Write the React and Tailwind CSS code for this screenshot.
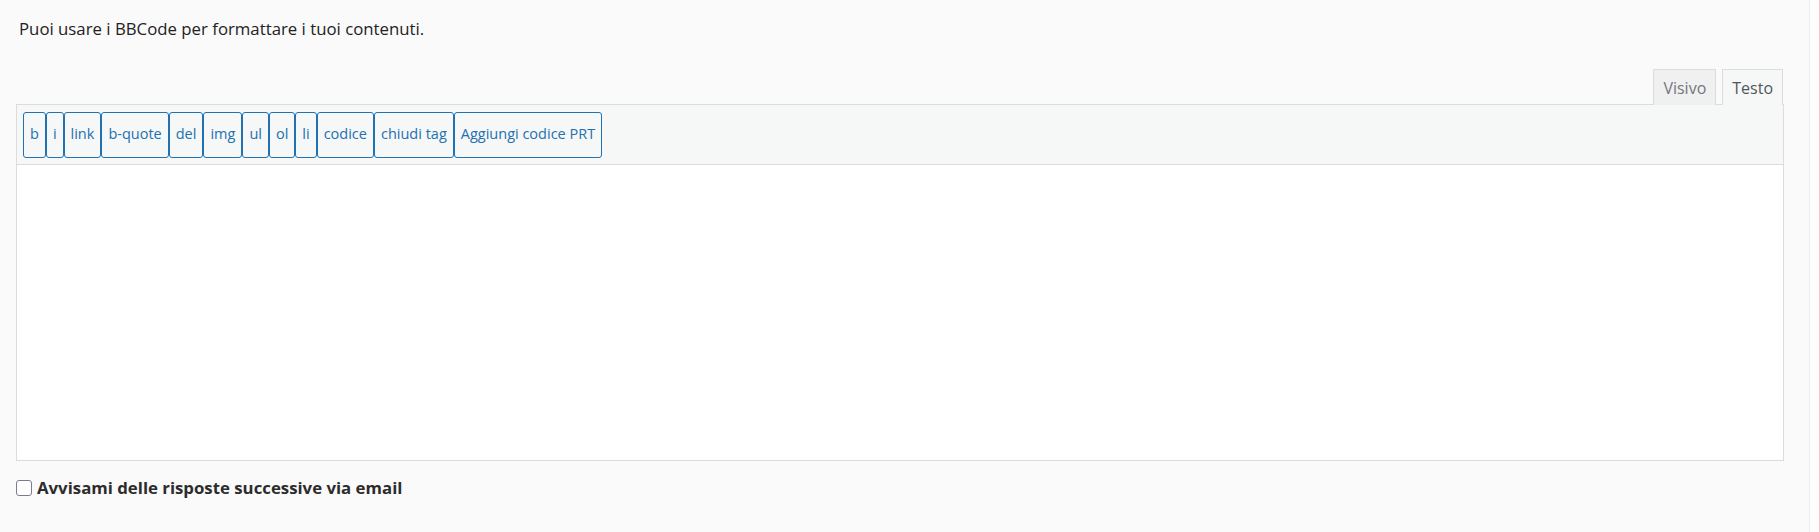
const BUTTONS = ['b', 'i', 'link', 'b-quote', 'del', 'img', 'ul', 'ol', 'li', 'codice', 'chiudi tag', 'Aggiungi codice PRT'];

export default function App() {
  return (
    <div className="bg-[#fdfdfd] w-[1819px] min-h-[532px]" style={{ fontFamily: '"Open Sans", "Noto Sans", sans-serif' }}>
      <div className="w-[1810px] min-h-[532px] bg-[#fafafa] border-r border-[#ececec] pl-4 pr-[25px] pt-[16px]">

        {/* Intro */}
        <p className="text-[16.8px] leading-[26px] text-[#222] pl-[3px]">Puoi usare i BBCode per formattare i tuoi contenuti.</p>

        {/* Editor tabs */}
        <div className="mt-[27px] flex justify-end gap-[6px] pr-px">
          <button className="h-[36px] px-[9px] text-[16px] text-[#72777c] bg-[#f0f0f1] border border-[#dcdcde] border-b-0">Visivo</button>
          <button className="h-[36px] px-[9px] text-[16px] text-[#50575e] bg-[#f6f7f7] border border-[#dcdcde] border-b-0 relative z-10 -mb-px">Testo</button>
        </div>

        {/* Quicktags toolbar */}
        <div className="-mt-px bg-[#f6f7f7] border border-[#dcdcde] h-[61px] flex items-center pl-[6px]">
          {BUTTONS.map((b) => (
            <button key={b} className="h-[46px] px-[6px] border-[1.5px] border-[#2271b1] rounded-[3px] bg-[#f6f7f7] text-[14.5px] text-[#2271b1] leading-none">
              {b}
            </button>
          ))}
        </div>

        {/* Textarea */}
        <div className="h-[296px] bg-white border border-t-0 border-[#dcdcde]" />

        {/* Notify */}
        <label className="mt-[15px] h-6 flex items-center gap-[5px]">
          <span className="w-[16px] h-[16px] border-[1.5px] border-[#7b7b89] rounded-[3px] bg-white" />
          <span className="text-[16.8px] font-bold text-[#2c2c2c]">Avvisami delle risposte successive via email</span>
        </label>
      </div>
    </div>
  );
}
